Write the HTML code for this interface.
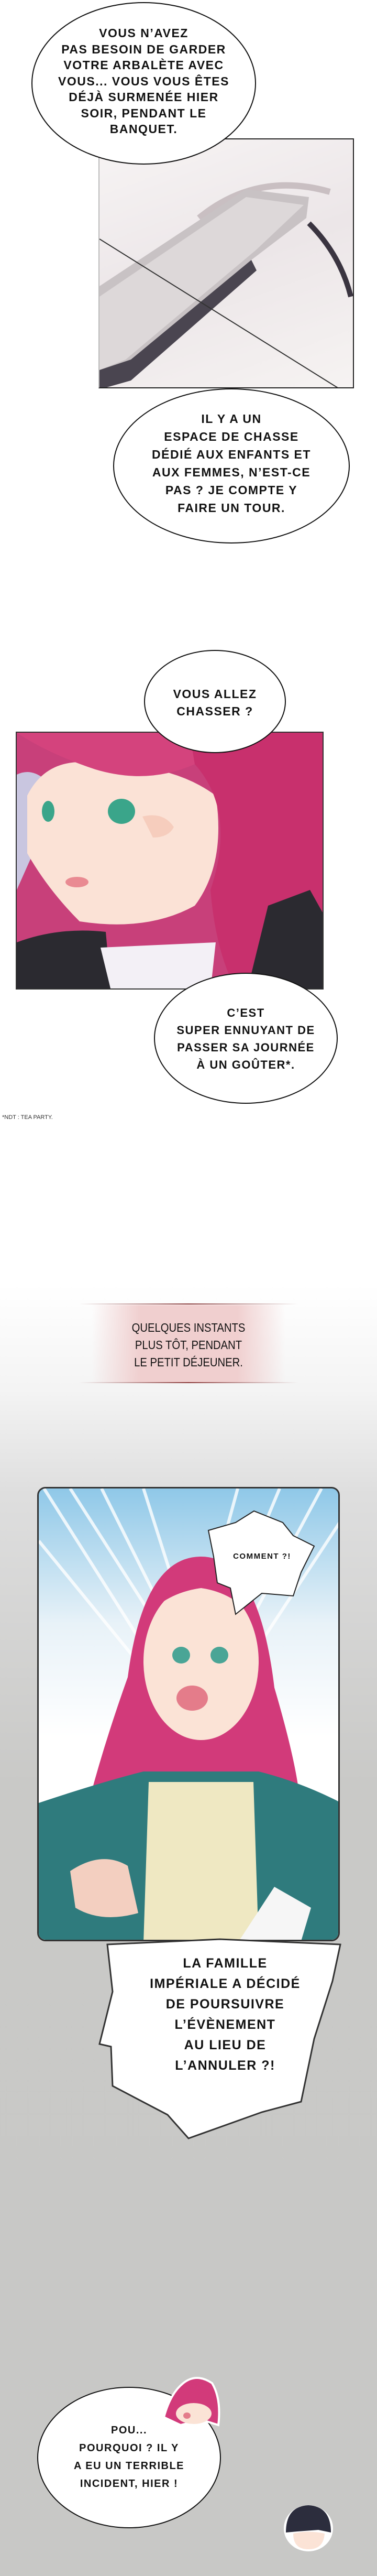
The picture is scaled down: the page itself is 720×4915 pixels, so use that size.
<!DOCTYPE html>
<html><head><meta charset="utf-8"><style>
*{margin:0;padding:0;box-sizing:border-box}
body{width:720px;height:4915px;position:relative;overflow:hidden;font-family:"Liberation Sans",sans-serif;
background:linear-gradient(#fff 0,#fff 2450px,#f4f4f4 2650px,#dedede 2850px,#c9c9c7 3400px,#c8c8c6 4915px)}
.a{position:absolute}
.bub{position:absolute;background:#fff;border:2px solid #111;border-radius:50%}
.t{position:absolute;text-align:center;font-weight:bold;color:#111;text-transform:uppercase;letter-spacing:1.5px}
</style></head><body>

<!-- crossbow panel -->
<div class="a" style="left:188px;top:264px;width:488px;height:477px;border:2px solid #222;border-left-color:#bbb;background:linear-gradient(160deg,#f7f4f4,#ece6e8 50%,#f6f3f2);overflow:hidden">
<svg width="488" height="477" viewBox="0 0 488 477">
<path d="M190 150 Q300 60 440 100" stroke="#c9bfc2" stroke-width="12" fill="none"/>
<path d="M400 160 Q460 220 480 300" stroke="#3a3440" stroke-width="10" fill="none"/>
<polygon points="0,280 280,95 400,110 395,150 290,230 60,440 0,470" fill="#c8c2c4"/>
<polygon points="0,300 280,110 390,125 300,210 50,420 0,440" fill="#ddd8d9"/>
<polygon points="0,440 60,420 290,230 300,250 60,460 0,477" fill="#4a4550"/>
<line x1="0" y1="190" x2="460" y2="477" stroke="#333" stroke-width="2"/>
</svg></div>

<!-- bubble 1 -->
<div class="bub" style="left:60px;top:4px;width:429px;height:310px"></div>
<div class="t" style="left:60px;top:48px;width:429px;font-size:23px;line-height:30.5px">Vous n’avez<br>pas besoin de garder<br>votre arbalète avec<br>vous... vous vous êtes<br>déjà surmenée hier<br>soir, pendant le<br>banquet.</div>

<!-- bubble 2 -->
<div class="bub" style="left:216px;top:741px;width:452px;height:296px"></div>
<div class="t" style="left:216px;top:782px;width:452px;font-size:23px;line-height:34px">Il y a un<br>espace de chasse<br>dédié aux enfants et<br>aux femmes, n’est-ce<br>pas ? Je compte y<br>faire un tour.</div>

<!-- face panel -->
<div class="a" style="left:30px;top:1396px;width:588px;height:492px;border:2px solid #333;background:#c8457c;overflow:hidden">
<svg width="588" height="492" viewBox="0 0 588 492">
<rect width="588" height="492" fill="#c8407a"/>
<path d="M0 80 Q40 60 80 120 L0 300Z" fill="#c9c6e0"/>
<path d="M20 120 Q60 40 160 60 Q300 60 380 120 Q400 250 340 330 Q250 380 120 360 Q60 300 20 230Z" fill="#fbe2d6"/>
<path d="M0 0 H588 V60 Q400 40 330 0Z M0 0 Q60 40 150 70 Q250 100 340 60 L330 0Z" fill="#d4437d"/>
<path d="M340 60 Q420 150 370 300 Q380 420 420 492 H588 V0 H330Z" fill="#c8306d"/>
<path d="M240 160 Q280 150 300 180 Q290 200 260 200Z" fill="#f6cdbd"/>
<ellipse cx="200" cy="150" rx="26" ry="24" fill="#3aa58a"/>
<ellipse cx="60" cy="150" rx="12" ry="20" fill="#3aa58a"/>
<path d="M0 400 Q80 370 170 380 L180 492 H0Z" fill="#2b2a30"/>
<path d="M160 410 L380 400 L370 492 L180 492Z" fill="#f3f0f6"/>
<path d="M480 330 L560 300 L588 350 L588 492 L440 492Z" fill="#2b2a30"/>
<ellipse cx="115" cy="285" rx="22" ry="10" fill="#e98a92"/>
</svg></div>

<!-- bubble chasser -->
<div class="bub" style="left:275px;top:1240px;width:271px;height:197px"></div>
<div class="t" style="left:275px;top:1308px;width:271px;font-size:23px;line-height:33px">Vous allez<br>chasser ?</div>

<!-- bubble c'est -->
<div class="bub" style="left:294px;top:1856px;width:351px;height:250px"></div>
<div class="t" style="left:294px;top:1916px;width:351px;font-size:22px;line-height:33px">C’est<br>super ennuyant de<br>passer sa journée<br>à un goûter*.</div>

<div class="a" style="left:4px;top:2126px;font-size:11px;color:#333">*NDT : TEA PARTY.</div>

<!-- caption -->
<div class="a" style="left:151px;top:2487px;width:418px;height:2px;background:linear-gradient(90deg,transparent,#8a3a3a,transparent)"></div>
<div class="a" style="left:175px;top:2490px;width:370px;height:147px;background:linear-gradient(90deg,rgba(240,200,200,0),#f0cfcf 25%,#f0cfcf 75%,rgba(240,200,200,0))"></div>
<div class="a" style="left:151px;top:2637px;width:418px;height:2px;background:linear-gradient(90deg,transparent,#8a3a3a,transparent)"></div>
<div class="t" style="left:151px;top:2517px;width:418px;font-size:23px;line-height:33px;font-weight:normal;letter-spacing:0;transform:scaleX(.88)">Quelques instants<br>plus tôt, pendant<br>le petit déjeuner.</div>

<!-- big panel -->
<div class="a" style="left:71px;top:2837px;width:578px;height:867px;border:3px solid #333;border-radius:16px;background:linear-gradient(#8fc8e8,#e8f2f8 30%,#fff 55%);overflow:hidden">
<svg width="578" height="867" viewBox="0 0 578 867">
<g stroke="#fff" stroke-width="6" opacity=".8"><line x1="10" y1="0" x2="200" y2="300"/><line x1="60" y1="0" x2="220" y2="250"/><line x1="120" y1="0" x2="250" y2="260"/><line x1="200" y1="0" x2="270" y2="220"/><line x1="380" y1="0" x2="320" y2="220"/><line x1="460" y1="0" x2="360" y2="240"/><line x1="540" y1="0" x2="400" y2="260"/><line x1="578" y1="60" x2="420" y2="300"/><line x1="0" y1="100" x2="180" y2="320"/></g>
<path d="M170 360 Q200 130 310 130 Q420 130 450 380 Q500 550 500 620 L90 620 Q120 500 170 360Z" fill="#d23a7a"/>
<ellipse cx="310" cy="330" rx="110" ry="150" fill="#fbe3d6"/>
<path d="M200 250 Q230 140 310 140 Q400 140 420 260 Q380 200 310 190 Q240 200 200 250Z" fill="#d23a7a"/>
<ellipse cx="272" cy="318" rx="17" ry="16" fill="#4aa596"/><ellipse cx="345" cy="318" rx="17" ry="16" fill="#4aa596"/>
<ellipse cx="293" cy="400" rx="30" ry="24" fill="#e47c8a"/>
<path d="M0 600 Q120 560 200 540 L420 540 Q500 560 578 600 V867 H0Z" fill="#2f7b7d"/>
<path d="M210 560 L410 560 L420 867 L200 867Z" fill="#efe8c2"/>
<path d="M60 730 Q120 690 170 720 L190 810 Q120 830 70 800Z" fill="#f3cfc0"/>
<polygon points="380,867 450,760 520,800 500,867" fill="#f6f6f6"/>
</svg></div>

<!-- comment spiky -->
<svg class="a" style="left:390px;top:2880px" width="220" height="205" viewBox="0 0 220 205">
<polygon points="8,40 60,25 95,3 150,25 170,50 210,70 185,120 170,165 110,160 60,200 50,150 25,140 18,90" fill="#fff" stroke="#222" stroke-width="2"/></svg>
<div class="t" style="left:418px;top:2961px;width:165px;font-size:15px">Comment ?!</div>

<!-- big spiky -->
<svg class="a" style="left:180px;top:3690px" width="480" height="395" viewBox="0 0 480 395">
<polygon points="25,20 240,10 470,20 455,90 420,200 395,320 320,340 180,390 140,345 35,290 32,215 10,210 35,110" fill="#fff" stroke="#333" stroke-width="3"/></svg>
<div class="t" style="left:230px;top:3727px;width:400px;font-size:25px;line-height:39px">La famille<br>impériale a décidé<br>de poursuivre<br>l’évènement<br>au lieu de<br>l’annuler ?!</div>

<!-- pou bubble -->
<div class="bub" style="left:71px;top:4554px;width:351px;height:270px;border-width:2px"></div>
<div class="t" style="left:71px;top:4620px;width:351px;font-size:20px;line-height:34px">Pou...<br>pourquoi ? Il y<br>a eu un terrible<br>incident, hier !</div>

<!-- chibis -->
<svg class="a" style="left:305px;top:4527px" width="118" height="108" viewBox="0 0 118 108">
<path d="M8 85 Q20 40 45 20 Q70 0 100 20 Q118 50 112 100 L80 90 L40 100Z" fill="#d23a7a" stroke="#fff" stroke-width="4"/>
<ellipse cx="65" cy="78" rx="34" ry="20" fill="#fbe3d6"/><ellipse cx="52" cy="82" rx="7" ry="6" fill="#e47c8a"/></svg>
<svg class="a" style="left:538px;top:4772px" width="102" height="100" viewBox="0 0 102 100">
<ellipse cx="51" cy="52" rx="47" ry="44" fill="#fff"/>
<path d="M8 60 Q8 10 51 8 Q94 10 94 60 L70 55 L30 58Z" fill="#2c2d3d"/>
<path d="M22 62 Q50 55 82 62 Q80 92 51 92 Q22 92 22 62Z" fill="#fbe3d6"/></svg>

</body></html>
